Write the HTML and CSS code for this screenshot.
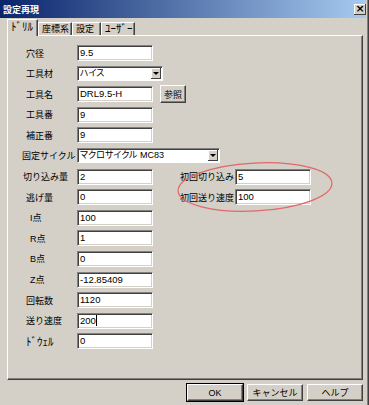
FILE: index.html
```html
<!DOCTYPE html>
<html lang="ja">
<head>
    <meta charset="UTF-8">
    <meta name="viewport" content="width=device-width, initial-scale=1.0">
    <title>設定再現</title>
    <link rel="stylesheet" href="styles.css">
</head>
<body>
    <div class="window">
        <div class="titlebar">
            <span class="title">設定再現</span>
            <span class="close">×</span>
        </div>

        <div class="tabs">
            <div class="tab active t1"><span class="hw">ﾄﾞﾘﾙ</span></div>
            <div class="tab t2">座標系</div>
            <div class="tab t3">設定</div>
            <div class="tab t4"><span class="hw">ﾕｰｻﾞｰ</span></div>
        </div>

        <div class="panel">
            <div class="form">
                <label class="lab">穴径</label>
                <div class="field">9.5</div>

                <label class="lab">工具材</label>
                <div class="combo small"><span class="combo-text">ハイス</span><span class="arrow"></span></div>

                <label class="lab">工具名</label>
                <div class="field">DRL9.5-H</div>
                <button class="btn ref">参照</button>

                <label class="lab">工具番</label>
                <div class="field">9</div>

                <label class="lab">補正番</label>
                <div class="field">9</div>

                <label class="lab wide">固定サイクル</label>
                <div class="combo large"><span class="combo-text">マクロサイクル MC83</span><span class="arrow"></span></div>

                <label class="lab cut">切り込み量</label>
                <div class="field">2</div>
                <label class="lab2">初回切り込み</label>
                <div class="field col5">5</div>

                <label class="lab">逃げ量</label>
                <div class="field">0</div>
                <label class="lab2">初回送り速度</label>
                <div class="field col5">100</div>

                <label class="lab pt">I点</label>
                <div class="field">100</div>

                <label class="lab pt">R点</label>
                <div class="field">1</div>

                <label class="lab pt">B点</label>
                <div class="field">0</div>

                <label class="lab pt">Z点</label>
                <div class="field">-12.85409</div>

                <label class="lab">回転数</label>
                <div class="field">1120</div>

                <label class="lab">送り速度</label>
                <div class="field">200<span class="caret"></span></div>

                <label class="lab"><span class="hw">ﾄﾞｳｪﾙ</span></label>
                <div class="field">0</div>
            </div>
        </div>

        <div class="buttons">
            <button class="btn default">OK</button>
            <button class="btn">キャンセル</button>
            <button class="btn">ヘルプ</button>
        </div>

        <!-- red hand-drawn mark around the first-cut fields -->
        <svg class="mark" width="369" height="405" viewBox="0 0 369 405">
            <ellipse cx="255" cy="187" rx="77" ry="24" transform="rotate(-3 255 187)"
                     fill="none" stroke="#e06868" stroke-width="1.2"/>
        </svg>
    </div>
</body>
</html>
```

FILE: styles.css
```css
body {
    margin: 0;
    font-family: "Liberation Sans", "Noto Sans CJK JP", sans-serif;
    font-size: 9px;
    color: #000;
    background-color: #d4d0c8;
}
.window {
    position: relative;
    width: 369px;
    height: 405px;
    box-sizing: border-box;
    padding-right: 3px;
    background-color: #d4d0c8;
    box-shadow: inset -1px 0 #404040, inset -2px 0 #808080;
    overflow: hidden;
}
.titlebar {
    display: flex;
    align-items: center;
    justify-content: space-between;
    height: 18px;
    padding: 0 0 0 3px;
    background: linear-gradient(to right, #0a246a, #a6caf0);
}
.title {
    color: #fff;
    font-weight: bold;
    font-size: 9px;
}
.close {
    width: 12px;
    height: 11px;
    background-color: #d4d0c8;
    box-shadow: inset -1px -1px #404040, inset 1px 1px #fff;
    font-size: 11px;
    font-weight: bold;
    line-height: 10px;
    text-align: center;
    font-family: "DejaVu Sans", sans-serif;
}
.hw {
    font-size: 11px;
}
.tabs {
    display: flex;
    align-items: flex-end;
    height: 17px;
    padding-left: 7px;
    position: relative;
    z-index: 1;
}
.tab {
    height: 13px;
    box-sizing: border-box;
    padding-left: 3px;
    line-height: 12px;
    border-top: 1px solid #fff;
    border-left: 1px solid #fff;
    border-right: 1px solid #404040;
    box-shadow: inset -1px 0 #808080;
    white-space: nowrap;
}
.tab.active {
    height: 17px;
    line-height: 15px;
    padding-left: 3px;
    margin-bottom: -1px;
    background-color: #d4d0c8;
}
.t1 { width: 31px; }
.t2 { width: 34px; }
.t3 { width: 29px; }
.t4 { width: 34px; }
.panel {
    width: 356px;
    height: 345px;
    box-sizing: border-box;
    margin-left: 7px;
    border-top: 1px solid #fff;
    border-left: 1px solid #fff;
    border-right: 1px solid #404040;
    border-bottom: 1px solid #404040;
    box-shadow: inset -1px -1px #808080;
}
.form {
    display: grid;
    grid-template-columns: 55px 76px 27px 55px 76px;
    grid-auto-rows: 16px;
    row-gap: 4.6px;
    padding: 9px 0 0 14px;
}
.lab {
    grid-column: 1;
    align-self: center;
    padding-left: 4px;
    white-space: nowrap;
}
.lab.wide { padding-left: 0; }
.lab.cut { padding-left: 1px; }
.lab.pt { padding-left: 8px; }
.lab2 {
    grid-column: 4;
    align-self: center;
    white-space: nowrap;
}
.field {
    grid-column: 2;
    height: 16px;
    box-sizing: border-box;
    padding-left: 2px;
    font-size: 9.5px;
    line-height: 14px;
    background-color: #fff;
    border: 1px solid;
    border-color: #808080 #fff #fff #808080;
    box-shadow: inset 1px 1px #404040, inset -1px -1px #d4d0c8;
    white-space: nowrap;
}
.field.col5 { grid-column: 5; }
.caret {
    display: inline-block;
    width: 1px;
    height: 11px;
    background-color: #000;
    vertical-align: -2px;
}
.combo {
    grid-column: 2 / span 3;
    display: flex;
    align-items: stretch;
    align-self: center;
    height: 15px;
    box-sizing: border-box;
    padding: 1px;
    background-color: #fff;
    border: 1px solid;
    border-color: #808080 #fff #fff #808080;
    box-shadow: inset 1px 1px #404040;
}
.combo.small { width: 86px; }
.combo.large { width: 143px; }
.combo-text {
    flex: 1;
    padding-left: 1px;
    font-size: 9px;
    line-height: 11px;
    white-space: nowrap;
    font-feature-settings: "palt";
}
.arrow {
    position: relative;
    width: 10px;
    background-color: #d4d0c8;
    box-shadow: inset -1px -1px #404040, inset 1px 1px #fff;
}
.arrow::after {
    content: "";
    position: absolute;
    left: 2px;
    top: 4px;
    border-left: 3px solid transparent;
    border-right: 3px solid transparent;
    border-top: 3px solid #000;
}
.btn {
    font-family: "Liberation Sans", "Noto Sans CJK JP", sans-serif;
    font-size: 9px;
    padding: 0;
    color: #000;
    background-color: #d4d0c8;
    border: 1px solid;
    border-color: #fff #404040 #404040 #fff;
    box-shadow: inset -1px -1px #808080;
}
.btn.ref {
    grid-column: 3 / span 2;
    justify-self: start;
    align-self: center;
    width: 26px;
    height: 18px;
    margin-left: 7px;
}
.buttons {
    display: flex;
    justify-content: flex-end;
    gap: 4px;
    padding: 4px 3px 0 0;
}
.buttons .btn {
    width: 56px;
    height: 17px;
}
.btn.default {
    outline: 1px solid #000;
    outline-offset: 0;
}
.mark {
    position: absolute;
    left: 0;
    top: 0;
    pointer-events: none;
}
```
